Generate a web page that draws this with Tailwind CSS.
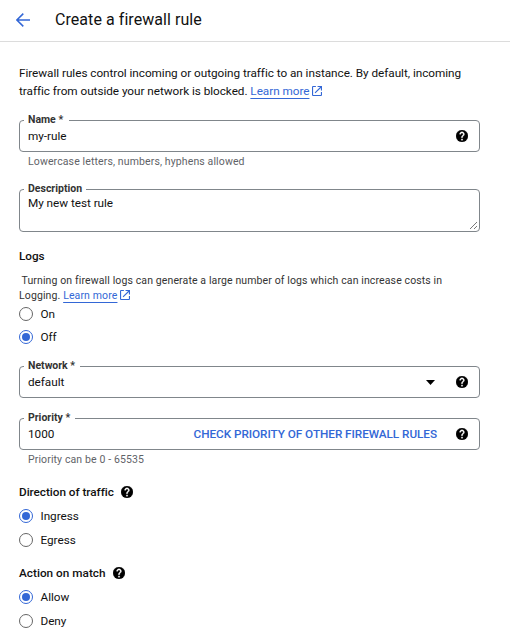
<!DOCTYPE html>
<html lang="en">
<head>
<meta charset="utf-8">
<title>Create a firewall rule</title>
<script src="https://cdn.jsdelivr.net/npm/@tailwindcss/browser@4"></script>
</head>
<body class="bg-white font-['Roboto',sans-serif] text-[11.750px] text-[#111] tracking-[-0.036px] overflow-hidden">
<svg class="hidden">
  <symbol id="help" viewBox="2 2 20 20"><circle cx="12" cy="12" r="10" fill="#000" stroke="#000" stroke-width=".6"/><path fill="#fff" stroke="#fff" stroke-width=".6" d="M13 19h-2v-2h2v2zm2.07-7.75l-.9.92C13.45 12.9 13 13.5 13 15h-2v-.5c0-1.1.45-2.1 1.17-2.83l1.24-1.26c.37-.36.59-.86.59-1.41 0-1.1-.9-2-2-2s-2 .9-2 2H8c0-2.21 1.79-4 4-4s4 1.79 4 4c0 .88-.36 1.68-.93 2.25z"/></symbol>
  <symbol id="ext" viewBox="3 3 18 18"><path fill="#3367d6" d="M19 19H5V5h5V3H5a2 2 0 0 0-2 2v14a2 2 0 0 0 2 2h14a2 2 0 0 0 2-2v-5h-2v5zM13 3v2h4.600l-9.800 9.800 1.400 1.400L19 6.400V11h2V3h-8z"/></symbol>
</svg>
<header class="flex h-[42px] items-center border-b border-[#dcdcdc] pl-[15.500px] pb-[2px]">
  <svg class="h-[14px] w-[14px]" viewBox="0 0 14 14" fill="none" stroke="#3367d6" stroke-width="1.500"><path d="M14 7H1M7.300.6.900 7l6.400 6.400"/></svg>
  <h1 class="ml-[25.500px] text-[16px] leading-5 tracking-[0.06px]">Create a firewall rule</h1>
</header>
<main class="flex w-[480px] flex-col pl-[19px]">
  <p class="mt-[22px] h-9 whitespace-nowrap leading-[18px]">Firewall rules control incoming or outgoing traffic to an instance. By default, incoming<br>traffic from outside your network is blocked. <a class="text-[#3367d6] underline decoration-1 underline-offset-[3px] [text-decoration-skip-ink:none]">Learn more</a><svg class="ml-[2.500px] inline h-[10px] w-[10px] align-[-1px]"><use href="#ext"/></svg></p>

  <div class="relative mt-5 flex h-8 w-[461px] items-center rounded-[4px] border border-[#80868b] pl-2 pr-[11px]">
    <label class="absolute -top-[8px] left-1 bg-white pl-1 pr-1.5 text-[10.500px] font-bold tracking-normal leading-[14px] text-[#333]">Name *</label>
    <span class="flex-1 leading-4">my-rule</span><svg class="h-3 w-3 overflow-visible"><use href="#help"/></svg>
  </div>
  <p class="mt-[2px] pl-[9px] text-[10.500px] leading-4 tracking-[0.12px] text-[#5f6368]">Lowercase letters, numbers, hyphens allowed</p>

  <div class="relative mt-[19px] h-[43px] w-[461px] rounded-[4px] border border-[#80868b] pl-2 pt-[5px]">
    <label class="absolute -top-[8px] left-1 bg-white px-1 text-[10.500px] font-bold tracking-normal leading-[14px] text-[#333]">Description</label>
    <span class="block leading-4">My new test rule</span>
    <svg class="absolute bottom-[2px] right-[2px] h-[7px] w-[7px]" viewBox="0 0 7 7" stroke="#555" stroke-width=".8"><path d="M0 7 7 0M4 7l3-3"/></svg>
  </div>

  <h2 class="mt-4 font-medium leading-4">Logs</h2>
  <p class="mt-[9px] h-[30px] whitespace-pre text-[10.500px] leading-[15px] tracking-[0.12px] text-[#333]"> Turning on firewall logs can generate a large number of logs which can increase costs in
Logging. <a class="text-[#3367d6] underline decoration-1 underline-offset-[3px] [text-decoration-skip-ink:none]">Learn more</a><svg class="ml-[3px] inline h-[10px] w-[10px] align-[-1px]"><use href="#ext"/></svg></p>
  <div class="mt-[3px] flex h-4 items-center gap-[7.500px] leading-4"><i class="h-[14px] w-[14px] rounded-full border border-[#666]"></i>On</div>
  <div class="mt-[7px] flex h-4 items-center gap-[7.500px] leading-4"><i class="flex h-[14px] w-[14px] items-center justify-center rounded-full border border-[#3367d6]"><b class="h-2 w-2 rounded-full bg-[#3367d6]"></b></i>Off</div>

  <div class="relative mt-[21px] flex h-8 w-[461px] items-center rounded-[4px] border border-[#80868b] pl-2 pr-[11px]">
    <label class="absolute -top-[8px] left-1 bg-white pl-1 pr-[5px] text-[10.500px] font-bold tracking-normal leading-[14px] text-[#333]">Network *</label>
    <span class="flex-1 leading-4">default</span>
    <svg class="mr-[21px] h-[5px] w-[9px]" viewBox="0 0 9 5"><path d="M0 0h9L4.500 5z"/></svg>
    <svg class="h-3 w-3 overflow-visible"><use href="#help"/></svg>
  </div>

  <div class="relative mt-5 flex h-8 w-[461px] items-center rounded-[4px] border border-[#80868b] pl-2 pr-[11px]">
    <label class="absolute -top-[8px] left-1 bg-white pl-1 pr-[5px] text-[10.500px] font-bold tracking-normal leading-[14px] text-[#333]">Priority *</label>
    <span class="flex-1 leading-4">1000</span>
    <span class="mr-[19px] font-medium leading-4 tracking-[-0.045px] text-[#3367d6]">CHECK PRIORITY OF OTHER FIREWALL RULES</span>
    <svg class="h-3 w-3 overflow-visible"><use href="#help"/></svg>
  </div>
  <p class="mt-[2px] pl-[9px] text-[10.500px] leading-4 tracking-[0.12px] text-[#5f6368]">Priority can be 0 - 65535</p>

  <h2 class="mt-4 flex h-4 items-center gap-[7px] font-medium leading-4">Direction of traffic<svg class="h-3 w-3 overflow-visible"><use href="#help"/></svg></h2>
  <div class="mt-2 flex h-4 items-center gap-[7.500px] leading-4"><i class="flex h-[14px] w-[14px] items-center justify-center rounded-full border border-[#3367d6]"><b class="h-2 w-2 rounded-full bg-[#3367d6]"></b></i>Ingress</div>
  <div class="mt-2 flex h-4 items-center gap-[7.500px] leading-4"><i class="h-[14px] w-[14px] rounded-full border border-[#666]"></i>Egress</div>

  <h2 class="mt-[17px] flex h-4 items-center gap-[7px] font-medium leading-4 tracking-[0.02px]">Action on match<svg class="h-3 w-3 overflow-visible"><use href="#help"/></svg></h2>
  <div class="mt-2 flex h-4 items-center gap-[7.500px] leading-4"><i class="flex h-[14px] w-[14px] items-center justify-center rounded-full border border-[#3367d6]"><b class="h-2 w-2 rounded-full bg-[#3367d6]"></b></i>Allow</div>
  <div class="mt-2 flex h-4 items-center gap-[7.500px] leading-4"><i class="h-[14px] w-[14px] rounded-full border border-[#666]"></i>Deny</div>
</main>
</body>
</html>
